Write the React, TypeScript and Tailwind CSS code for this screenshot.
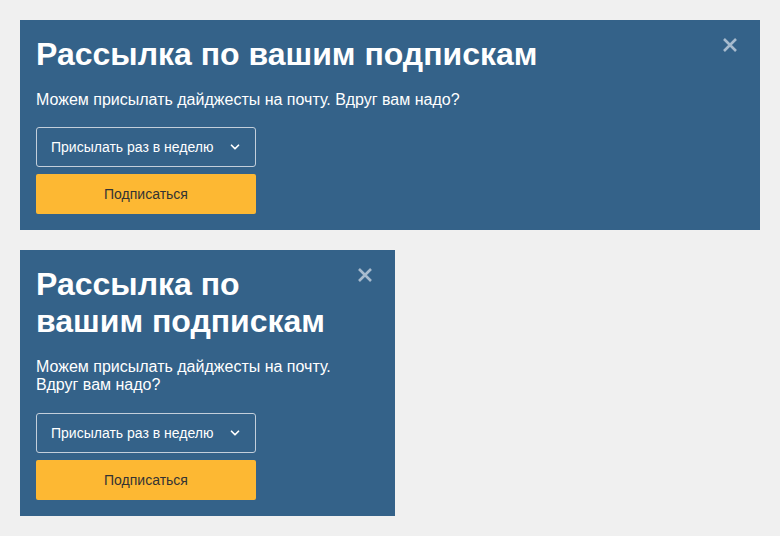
import { ChevronDown } from "lucide-react";

function SubscribeCard({ className }: { className?: string }) {
  return (
    <div className={`relative bg-[#346289] p-4 text-white ${className ?? ""}`}>
      <button className="absolute right-[20px] top-[15px] flex h-5 w-5 items-center justify-center text-[#a7bbce]">
        <svg width="16" height="16" viewBox="0 0 16 16" fill="none" stroke="currentColor" strokeWidth="2.6">
          <path d="M2 2L14 14M14 2L2 14" />
        </svg>
      </button>
      <h2 className="pr-10 text-[32px] font-bold leading-[1.15]">Рассылка по вашим подпискам</h2>
      <p className="mt-[18px] pr-10 text-base leading-[1.15]">
        Можем присылать дайджесты на почту. Вдруг вам надо?
      </p>
      <div className="mt-[18px] flex h-10 w-[220px] items-center justify-between rounded-[3px] border border-[#c3cfdb] pl-[14px] pr-[13px] text-sm">
        <span>Присылать раз в неделю</span>
        <ChevronDown size={14} strokeWidth={3} />
      </div>
      <button className="mt-[7px] flex h-10 w-[220px] items-center justify-center rounded-[2px] bg-[#fdb833] text-sm text-[#333]">
        Подписаться
      </button>
    </div>
  );
}

export default function App() {
  return (
    <div className="min-h-[536px] bg-[#f0f0f0] px-5 pt-5 font-['Liberation_Sans',Arial,sans-serif]">
      <SubscribeCard className="w-[740px]" />
      <SubscribeCard className="mt-5 w-[375px]" />
    </div>
  );
}
